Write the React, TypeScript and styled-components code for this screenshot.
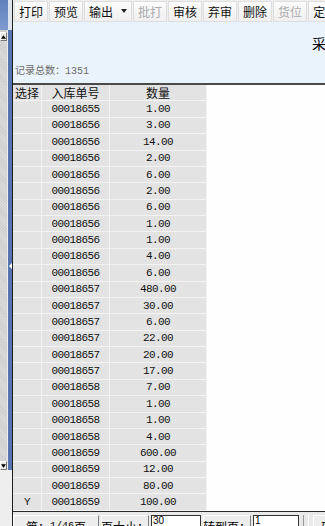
import React from 'react';
import styled, { createGlobalStyle } from 'styled-components';

const GlobalStyle = createGlobalStyle`
  html, body {
    margin: 0;
    padding: 0;
    width: 325px;
    height: 526px;
    overflow: hidden;
  }
  body {
    font-family: "Noto Sans CJK SC", "Liberation Sans", sans-serif;
    font-size: 12px;
    color: #000;
  }
`;

const Shell = styled.div`
  display: flex;
  width: 325px;
  height: 526px;
  overflow: hidden;
  background: #fff;
`;

/* left frame edge + splitter */
const Rail = styled.div`
  width: 12px;
  flex-shrink: 0;
  display: flex;
  flex-direction: column;
`;

const RailTop = styled.div`
  height: 30px;
  display: flex;
  background: #dfe4ec;
`;

const RailBlue = styled.div`
  width: 8px;
  background: linear-gradient(#5f80bd, #7d9ad0);
`;

const RailMid = styled.div`
  flex: 1;
  display: flex;
`;

const ScrollCol = styled.div`
  width: 8px;
  display: flex;
  flex-direction: column;
  background: #cdcdcd;
  border-right: 1px solid #ececec;
  box-sizing: border-box;
`;

const ScrollBtn = styled.div<{ $top?: boolean }>`
  height: 9px;
  margin-top: ${(p) => (p.$top ? '2px' : '0')};
  display: flex;
  align-items: center;
  justify-content: center;
  background: #ebe9e4;
  border: 1px solid;
  border-color: #fff #7a7a7a #7a7a7a #fff;
  box-sizing: border-box;
`;

const Track = styled.div`
  flex: 1;
  background: repeating-linear-gradient(45deg, #cfcfcf 0 1px, #dadada 1px 2px);
`;

const Splitter = styled.div`
  width: 4px;
  background: #5574b0;
  display: flex;
  justify-content: center;
  padding-top: 233px;
  box-sizing: border-box;
`;

const RailBottom = styled.div`
  height: 56px;
  background: #eeeeee;
`;

const Divider = styled.div`
  width: 1px;
  flex-shrink: 0;
  background: #1e1e1e;
`;

/* main frame */
const Main = styled.div`
  flex: 1;
  min-width: 0;
  display: flex;
  flex-direction: column;
  overflow: hidden;
`;

const Toolbar = styled.div`
  height: 22px;
  flex-shrink: 0;
  display: flex;
  align-items: center;
  gap: 1px;
  padding-left: 1px;
  background: #eeeeee;
  white-space: nowrap;
  overflow: hidden;
`;

const ToolButton = styled.div<{ $disabled?: boolean }>`
  height: 19px;
  flex-shrink: 0;
  display: flex;
  align-items: center;
  gap: 8px;
  padding: 0 4px;
  border: 1px solid #dedede;
  background: linear-gradient(#fcfcfc, #efefef);
  color: ${(p) => (p.$disabled ? '#a9a9a9' : '#111')};
  font-size: 12px;
  line-height: 19px;
`;

const TitleArea = styled.div`
  height: 61px;
  flex-shrink: 0;
  display: flex;
  flex-direction: column;
  background: #eaf3fc;
  white-space: nowrap;
  overflow: hidden;
`;

const Title = styled.div`
  margin-top: 13px;
  padding-left: 299px;
  font-size: 14px;
  line-height: 16px;
  color: #000;
`;

const RecordCount = styled.div`
  margin-top: 13px;
  padding-left: 2px;
  font-size: 10px;
  line-height: 12px;
  color: #6b6b6b;
`;

const Digits = styled.span<{ $size?: number }>`
  font-family: "Liberation Mono", "DejaVu Sans Mono", monospace;
  font-size: ${(p) => p.$size ?? 10}px;
`;

const HeavyRule = styled.div`
  height: 2px;
  flex-shrink: 0;
  background: #4a4a4a;
`;

const TableArea = styled.div`
  height: 426px;
  flex-shrink: 0;
  display: flex;
  background: #fefefe;
`;

const Grid = styled.div`
  display: grid;
  grid-template-columns: 29px 68px 97px;
  grid-auto-rows: 16.38px;
  align-content: start;
  background: #e3e3e3;
`;

const Cell = styled.div<{ $align?: 'left' | 'center'; $mono?: boolean }>`
  display: flex;
  align-items: center;
  justify-content: ${(p) => (p.$align === 'left' ? 'flex-start' : 'center')};
  padding-left: ${(p) => (p.$align === 'left' ? '2px' : '0')};
  border-right: 1px solid #f3f3f3;
  border-bottom: 1px solid #f3f3f3;
  box-sizing: border-box;
  font-family: ${(p) =>
    p.$mono
      ? '"Liberation Mono", "DejaVu Sans Mono", monospace'
      : '"Noto Sans CJK SC", "Liberation Sans", sans-serif'};
  font-size: ${(p) => (p.$mono ? '11px' : '12px')};
  letter-spacing: ${(p) => (p.$mono ? '-0.6px' : '0')};
  color: #111;
  white-space: nowrap;
`;

const BottomRule = styled.div`
  height: 1px;
  flex-shrink: 0;
  background: #2a2a2a;
`;

const Pager = styled.div`
  height: 30px;
  flex-shrink: 0;
  display: flex;
  align-items: flex-start;
  gap: 2px;
  padding-top: 3px;
  background: #e9e9e9;
  white-space: nowrap;
`;

const PagerButton = styled.div<{ $w: number }>`
  width: ${(p) => p.$w}px;
  height: 18px;
  flex-shrink: 0;
  display: flex;
  justify-content: center;
  align-items: center;
  border: 1px solid;
  border-color: #fff #808080 #808080 #fff;
  background: #ededed;
  box-sizing: border-box;
  font-size: 12px;
  padding-top: 4px;
`;

const PagerInput = styled.div<{ $w: number }>`
  width: ${(p) => p.$w}px;
  height: 18px;
  flex-shrink: 0;
  border: 1px solid #333;
  background: #fff;
  box-sizing: border-box;
  font-family: "Liberation Sans", sans-serif;
  font-size: 10px;
  line-height: 9px;
  padding-left: 1px;
`;

const PagerGap = styled.div`
  width: 4px;
  height: 18px;
  flex-shrink: 0;
  border-left: 1px solid #9a9a9a;
  border-right: 1px solid #fff;
  margin: 0 2px;
`;

const rows: [string, string, string][] = [
  ['', '00018655', '1.00'],
  ['', '00018656', '3.00'],
  ['', '00018656', '14.00'],
  ['', '00018656', '2.00'],
  ['', '00018656', '6.00'],
  ['', '00018656', '2.00'],
  ['', '00018656', '6.00'],
  ['', '00018656', '1.00'],
  ['', '00018656', '1.00'],
  ['', '00018656', '4.00'],
  ['', '00018656', '6.00'],
  ['', '00018657', '480.00'],
  ['', '00018657', '30.00'],
  ['', '00018657', '6.00'],
  ['', '00018657', '22.00'],
  ['', '00018657', '20.00'],
  ['', '00018657', '17.00'],
  ['', '00018658', '7.00'],
  ['', '00018658', '1.00'],
  ['', '00018658', '1.00'],
  ['', '00018658', '4.00'],
  ['', '00018659', '600.00'],
  ['', '00018659', '12.00'],
  ['', '00018659', '80.00'],
  ['Y', '00018659', '100.00'],
];

const Triangle: React.FC<{ dir: 'up' | 'down' | 'left'; color?: string }> = ({ dir, color = '#000' }) => {
  const pts = dir === 'up' ? '0,4 3,0 6,4' : dir === 'down' ? '0,0 6,0 3,4' : '3,0 3,6 0,3';
  const w = dir === 'left' ? 3 : 6;
  const h = dir === 'left' ? 6 : 4;
  return (
    <svg width={w} height={h} viewBox={`0 0 ${w} ${h}`}>
      <polygon points={pts} fill={color} />
    </svg>
  );
};

const tools: { label: string; disabled?: boolean; menu?: boolean }[] = [
  { label: '打印' },
  { label: '预览' },
  { label: '输出', menu: true },
  { label: '批打', disabled: true },
  { label: '审核' },
  { label: '弃审' },
  { label: '删除' },
  { label: '货位', disabled: true },
  { label: '定位' },
];

const App: React.FC = () => {
  return (
    <>
      <GlobalStyle />
      <Shell>
        <Rail>
          <RailTop>
            <RailBlue />
          </RailTop>
          <RailMid>
            <ScrollCol>
              <ScrollBtn $top>
                <Triangle dir="up" />
              </ScrollBtn>
              <Track />
              <ScrollBtn>
                <Triangle dir="down" />
              </ScrollBtn>
            </ScrollCol>
            <Splitter>
              <Triangle dir="left" color="#fff" />
            </Splitter>
          </RailMid>
          <RailBottom />
        </Rail>
        <Divider />
        <Main>
          <Toolbar>
            {tools.map((t) => (
              <ToolButton key={t.label} $disabled={t.disabled}>
                {t.label}
                {t.menu && <Triangle dir="down" color="#222" />}
              </ToolButton>
            ))}
          </Toolbar>
          <TitleArea>
            <Title>采购入库单列表</Title>
            <RecordCount>
              记录总数：<Digits>1351</Digits>
            </RecordCount>
          </TitleArea>
          <HeavyRule />
          <TableArea>
            <Grid>
              <Cell $align="left">选择</Cell>
              <Cell>入库单号</Cell>
              <Cell>数量</Cell>
              {rows.map(([sel, no, qty], i) => (
                <React.Fragment key={i}>
                  <Cell $mono>{sel}</Cell>
                  <Cell $mono>{no}</Cell>
                  <Cell $mono>{qty}</Cell>
                </React.Fragment>
              ))}
            </Grid>
          </TableArea>
          <BottomRule />
          <Pager>
            <PagerButton $w={86}>
              第：<Digits>1/46</Digits>页
            </PagerButton>
            <PagerButton $w={48}>页大小：</PagerButton>
            <PagerInput $w={50}>30</PagerInput>
            <PagerButton $w={48}>转到页：</PagerButton>
            <PagerInput $w={46}>1</PagerInput>
            <PagerGap />
            <PagerButton $w={40}>确定</PagerButton>
          </Pager>
        </Main>
      </Shell>
    </>
  );
};

export default App;
